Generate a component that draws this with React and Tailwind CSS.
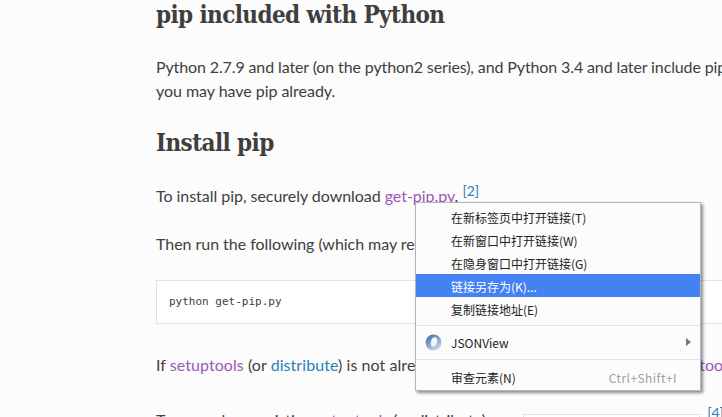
function MenuItem({ children, right, active, icon, arrow, nudge }) {
  return (
    <div className={`flex items-center h-[23px] pl-[35px] pr-[23px] text-[12px] relative ${active ? "bg-[#4482f4] text-white" : "text-[#222222]"}`}>
      {icon}
      <span className={nudge ? "pt-[2px]" : ""}>{children}</span>
      {right && <span className="ml-auto text-[#a0a0a0] tracking-[0.45px]">{right}</span>}
      {arrow && <span className="absolute right-[9px] top-[7px] w-0 h-0 border-y-[4px] border-y-transparent border-l-[5px] border-l-[#777777]" />}
    </div>
  );
}
export default function App() {
  return (
    <div className="relative w-[722px] h-[417px] overflow-hidden bg-[#fcfcfc] text-[#404040] font-['Lato','Liberation_Sans',sans-serif] text-[16px] tracking-[-0.04px]">
      <div className="pl-[156px] w-[900px]">
        <h1 className="font-['DejaVu_Serif_Condensed','DejaVu_Serif',serif] font-stretch-condensed font-bold text-[24px] leading-[30px] tracking-[-0.6px] text-[#3f3f3f]">pip included with Python</h1>
        <p className="mt-[25px] leading-[24px] whitespace-nowrap tracking-[-0.12px]">Python 2.7.9 and later (on the python2 series), and Python 3.4 and later include pip by default, so</p>
        <p className="leading-[24px] whitespace-nowrap">you may have pip already.</p>
        <h2 className="mt-[25px] font-['DejaVu_Serif_Condensed','DejaVu_Serif',serif] font-stretch-condensed font-bold text-[24px] leading-[30px] tracking-[-0.6px] text-[#3f3f3f]">Install pip</h2>
        <p className="mt-[26px] h-[24px] leading-[24px] whitespace-nowrap">To install pip, securely download <span className="text-[#9b59b6]">get-pip.py</span>. <span className="inline-block text-[#2980b9] text-[14px] leading-none align-[6px]">[2]</span></p>
        <p className="mt-[24px] leading-[24px] whitespace-nowrap">Then run the following (which may require administrator access):</p>
        <div className="mt-[24px] w-[700px] h-[44px] border border-[#e1e4e5] bg-white flex items-center pl-[12px] font-['DejaVu_Sans_Mono','Liberation_Mono',monospace] text-[11px] tracking-normal text-[#404040]">python get-pip.py</div>
        <p className="mt-[29px] leading-[24px] whitespace-nowrap tracking-[0.06px]">If <span className="text-[#9b59b6]">setuptools</span> (or <span className="text-[#2980b9]">distribute</span>) is not already installed, <span className="text-[#9b59b6]">get-pip.py</span> will install <span className="text-[#9b59b6]">setuptools</span> for you.</p>
        <div className="mt-[31px] flex items-start h-[24px] whitespace-nowrap leading-[24px]">
          <span>To upgrade an existing <span className="text-[#9b59b6]">setuptools</span> (or distribute), run</span>
          <span className="ml-[6px] mt-[6px] w-[177px] h-[20px] border border-[#e1e4e5] bg-white shrink-0" />
          <span className="ml-[7px] -mt-[3px] text-[#2980b9] text-[14px] leading-[16px]">[4]</span>
        </div>
      </div>
      <div className="absolute left-[415px] top-[202px] w-[286px] h-[189px] bg-[#fcfcfc] border border-[#b5b5b5] shadow-[2px_2px_3px_rgba(0,0,0,0.45)] pt-[2px] font-['Noto_Sans_CJK_SC','Liberation_Sans',sans-serif] tracking-normal">
        <MenuItem nudge>在新标签页中打开链接(T)</MenuItem>
        <MenuItem nudge>在新窗口中打开链接(W)</MenuItem>
        <MenuItem nudge>在隐身窗口中打开链接(G)</MenuItem>
        <MenuItem nudge active>链接另存为(K)...</MenuItem>
        <MenuItem nudge>复制链接地址(E)</MenuItem>
        <div className="h-px bg-[#e4e4e4] mt-[5px] mb-[5px]" />
        <MenuItem arrow icon={
          <svg className="absolute left-[9px] top-[3px]" width="17" height="17" viewBox="0 0 17 17">
            <defs>
              <linearGradient id="g" x1="0.1" y1="0" x2="0.7" y2="1"><stop offset="0" stopColor="#3f6fa8" /><stop offset="0.6" stopColor="#8fadd0" /><stop offset="1" stopColor="#d3dde8" /></linearGradient>
            </defs>
            <circle cx="8.5" cy="8.5" r="8" fill="url(#g)" />
            <ellipse cx="9" cy="8" rx="3" ry="4.8" fill="#f2f5f9" transform="rotate(15 9 8)" />
          </svg>
        }>JSONView</MenuItem>
        <div className="h-px bg-[#e4e4e4] mt-[5px] mb-[6px]" />
        <MenuItem right="Ctrl+Shift+I">审查元素(N)</MenuItem>
      </div>
    </div>
  );
}
